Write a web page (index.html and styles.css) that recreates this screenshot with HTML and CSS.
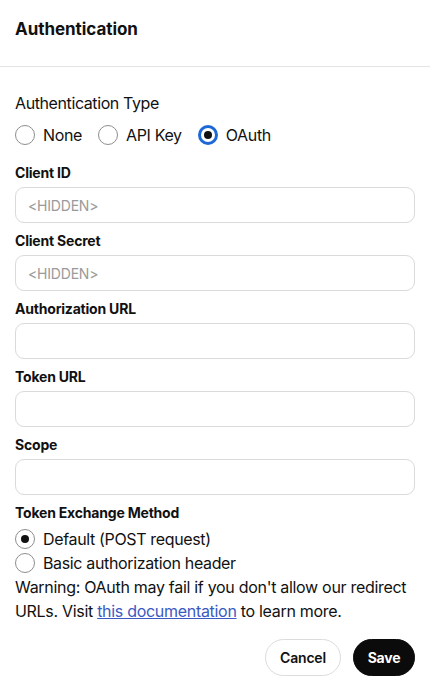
FILE: index.html
```html
<!DOCTYPE html>
<html lang="en">
<head>
<meta charset="utf-8">
<title>Authentication</title>
<link rel="stylesheet" href="styles.css">
</head>
<body>
<div class="dialog">
  <header class="header">
    <h1 class="title">Authentication</h1>
  </header>
  <main class="content">
    <div class="type-label">Authentication Type</div>
    <div class="radio-row">
      <label class="radio"><span class="dot"></span><span>None</span></label>
      <label class="radio"><span class="dot"></span><span>API Key</span></label>
      <label class="radio"><span class="dot checked focus"></span><span>OAuth</span></label>
    </div>

    <div class="field first">
      <div class="field-label">Client ID</div>
      <div class="input"><span class="placeholder">&lt;HIDDEN&gt;</span></div>
    </div>
    <div class="field">
      <div class="field-label">Client Secret</div>
      <div class="input"><span class="placeholder">&lt;HIDDEN&gt;</span></div>
    </div>
    <div class="field">
      <div class="field-label">Authorization URL</div>
      <div class="input"></div>
    </div>
    <div class="field">
      <div class="field-label">Token URL</div>
      <div class="input"></div>
    </div>
    <div class="field">
      <div class="field-label">Scope</div>
      <div class="input"></div>
    </div>

    <div class="field-label method-label">Token Exchange Method</div>
    <div class="radio-col">
      <label class="radio"><span class="dot checked"></span><span>Default (POST request)</span></label>
      <label class="radio"><span class="dot"></span><span>Basic authorization header</span></label>
    </div>
    <p class="warning">Warning: OAuth may fail if you don't allow our redirect URLs. Visit <a href="#" class="link">this documentation</a> to learn more.</p>

    <div class="actions">
      <button class="btn btn-cancel">Cancel</button>
      <button class="btn btn-save">Save</button>
    </div>
  </main>
</div>
</body>
</html>
```

FILE: styles.css
```css
* { box-sizing: border-box; }
html, body {
  margin: 0;
  padding: 0;
  background: #fff;
}
body {
  font-family: Inter, "Liberation Sans", sans-serif;
  color: #111;
  -webkit-font-smoothing: antialiased;
}
.dialog {
  width: 430px;
}
.header {
  height: 67px;
  padding: 18px 15px 0;
  border-bottom: 1px solid #e4e4e4;
}
.title {
  margin: 0;
  font-size: 17px;
  line-height: 22px;
  font-weight: 700;
  letter-spacing: -0.05px;
}
.content {
  padding: 24px 15px 0;
  display: flex;
  flex-direction: column;
}
.type-label {
  font-size: 16px;
  line-height: 24px;
  letter-spacing: -0.4px;
}
.radio-row {
  display: flex;
  gap: 16px;
  margin-top: 8px;
}
.radio {
  display: flex;
  align-items: center;
  gap: 8px;
  font-size: 16px;
  line-height: 24px;
  letter-spacing: -0.35px;
}
.dot {
  width: 20px;
  height: 20px;
  border-radius: 50%;
  border: 1px solid #8e8e8e;
  display: flex;
  align-items: center;
  justify-content: center;
  flex: none;
}
.dot.checked::after {
  content: "";
  width: 8px;
  height: 8px;
  border-radius: 50%;
  background: #111;
}
.dot.focus {
  border: 3px solid #1c68d6;
}
.field {
  display: flex;
  flex-direction: column;
  gap: 4px;
  margin-top: 8px;
}
.field.first {
  margin-top: 16px;
}
.field-label {
  font-size: 14px;
  line-height: 20px;
  font-weight: 700;
  letter-spacing: -0.2px;
}
.input {
  height: 36px;
  border: 1px solid #dadada;
  border-radius: 9px;
  padding: 0 12px;
  display: flex;
  align-items: center;
}
.placeholder {
  color: #9a9a9a;
  font-size: 14px;
  letter-spacing: -0.2px;
}
.method-label {
  margin-top: 8px;
}
.radio-col {
  display: flex;
  flex-direction: column;
  margin-top: 4px;
}
.warning {
  margin: 0;
  font-size: 16px;
  line-height: 24px;
  letter-spacing: -0.3px;
}
.link {
  color: #3a59c3;
  text-decoration: underline;
}
.actions {
  display: flex;
  justify-content: flex-end;
  gap: 12px;
  margin-top: 16px;
}
.btn {
  height: 37px;
  border-radius: 999px;
  font-family: inherit;
  font-size: 14px;
  font-weight: 600;
  padding: 0;
  cursor: pointer;
  letter-spacing: -0.2px;
}
.btn-cancel {
  background: #fff;
  border: 1px solid #dcdcdc;
  color: #111;
  width: 76px;
}
.btn-save {
  background: #0b0b0b;
  border: 1px solid #0b0b0b;
  color: #fff;
  font-weight: 700;
  width: 62px;
}
```
